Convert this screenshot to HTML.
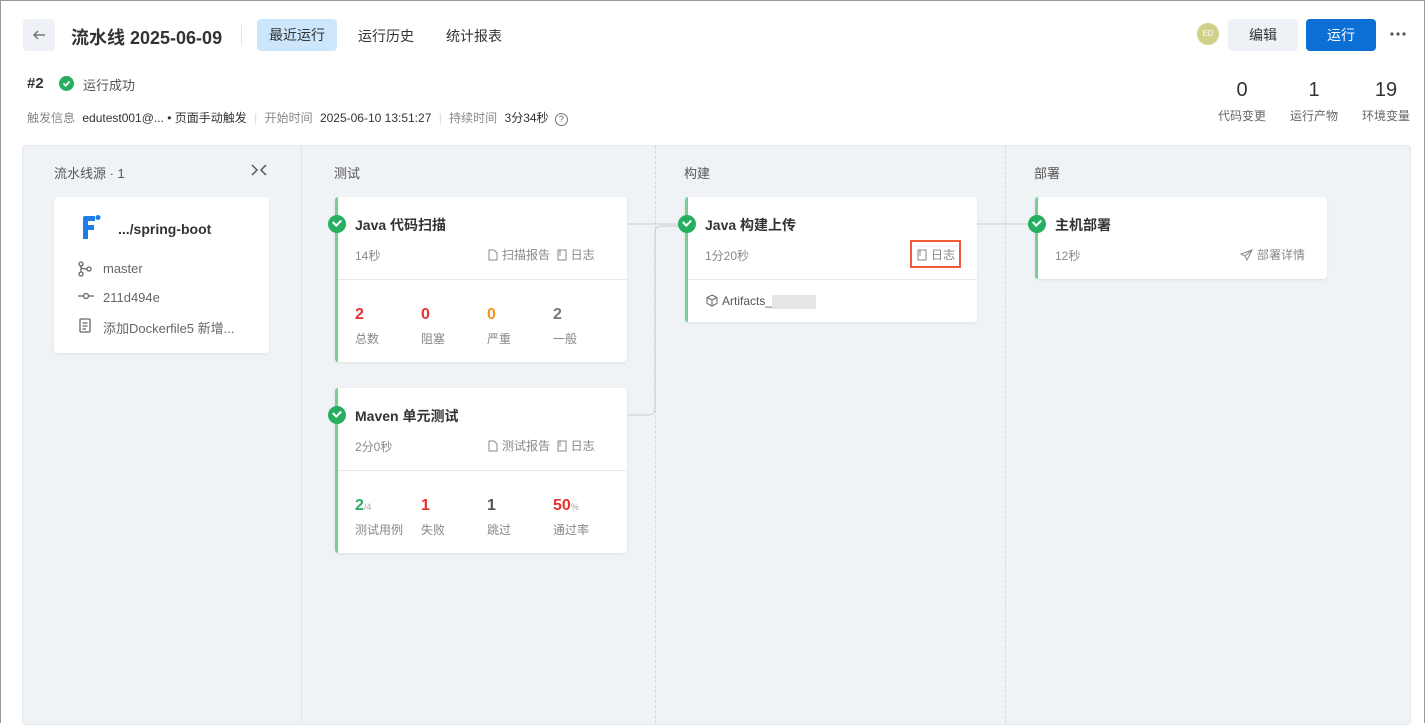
<!DOCTYPE html>
<html><head><meta charset="utf-8"><style>
*{box-sizing:border-box;margin:0;padding:0}
body{width:1425px;height:723px;overflow:hidden;background:#fff;font-family:"Liberation Sans","Noto Sans CJK SC",sans-serif;color:#333;position:relative}
.a{position:absolute;white-space:nowrap}
.card{position:absolute;background:#fff;border-radius:4px;box-shadow:0 1px 3px rgba(0,0,0,.08)}
.bar{position:absolute;left:0;top:0;bottom:0;width:3px;background:#74d18e;border-radius:3px 0 0 3px}
.chk{position:absolute;left:-7px;top:18px;width:18px;height:18px;border-radius:50%;background:#27ae60}
.chk:after{content:"";position:absolute;left:5px;top:4px;width:6px;height:4px;border-left:2px solid #fff;border-bottom:2px solid #fff;transform:rotate(-45deg)}
.t{font-size:13px;font-weight:bold;color:#333}
.s{font-size:12px;color:#888}
.hr{position:absolute;left:3px;right:0;height:1px;background:#e8e8e8}
.n{font-size:16px;font-weight:bold}
svg.i{vertical-align:-2px;margin-right:4px}
</style></head><body>
<div class="a" style="left:0;top:0;width:1425px;height:723px;border:1px solid #999;border-bottom:none"></div>
<div class="a" style="left:23px;top:19px;width:32px;height:32px;background:#eef1f5;border-radius:4px"></div>
<svg class="a" style="left:31px;top:27px" width="16" height="16"><path d="M14 8H3M7 4L3 8L7 12" fill="none" stroke="#777" stroke-width="1.5"/></svg>
<div class="a" style="left:71px;top:24px;font-size:18px;font-weight:bold;color:#333">流水线 2025-06-09</div>
<div class="a" style="left:241px;top:25px;width:1px;height:20px;background:#e3e3e3"></div>
<div class="a" style="left:257px;top:19px;width:80px;height:32px;background:#cce6fb;border-radius:4px;text-align:center;line-height:32px;font-size:14px">最近运行</div>
<div class="a" style="left:358px;top:26px;font-size:14px">运行历史</div>
<div class="a" style="left:446px;top:26px;font-size:14px">统计报表</div>
<div class="a" style="left:1197px;top:23px;width:22px;height:22px;border-radius:50%;background:#cfd08a;color:#fff;font-size:8px;text-align:center;line-height:22px">ED</div>
<div class="a" style="left:1228px;top:19px;width:70px;height:32px;background:#eef1f5;border-radius:4px;text-align:center;line-height:32px;font-size:14px">编辑</div>
<div class="a" style="left:1306px;top:19px;width:70px;height:32px;background:#0b6fd6;border-radius:4px;text-align:center;line-height:32px;font-size:14px;color:#fff">运行</div>
<svg class="a" style="left:1390px;top:32px" width="16" height="4"><circle cx="2" cy="2" r="1.6" fill="#555"/><circle cx="8" cy="2" r="1.6" fill="#555"/><circle cx="14" cy="2" r="1.6" fill="#555"/></svg>
<div class="a" style="left:27px;top:75px;font-size:15px;font-weight:bold">#2</div>
<div class="a" style="left:59px;top:76px;width:15px;height:15px;border-radius:50%;background:#27ae60"></div>
<svg class="a" style="left:59px;top:76px" width="15" height="15"><path d="M4.5 7.5L6.7 9.7L10.5 5.5" fill="none" stroke="#fff" stroke-width="1.8"/></svg>
<div class="a" style="left:83px;top:75px;font-size:13px;color:#555">运行成功</div>
<div class="a" style="left:27px;top:109px;font-size:12px;color:#888">触发信息 <span style="color:#333;margin-left:4px">edutest001@... • 页面手动触发</span> <span style="color:#ddd;margin:0 4px">|</span> 开始时间 <span style="color:#333;margin-left:4px">2025-06-10 13:51:27</span> <span style="color:#ddd;margin:0 4px">|</span> 持续时间 <span style="color:#333;margin-left:4px">3分34秒</span> <span style="display:inline-block;width:13px;height:13px;border:1px solid #777;border-radius:50%;font-size:9px;text-align:center;line-height:11px;color:#666;margin-left:3px">?</span></div>
<div class="a" style="left:1217px;top:79px;width:50px;text-align:center;font-size:20px">0</div>
<div class="a" style="left:1289px;top:79px;width:50px;text-align:center;font-size:20px">1</div>
<div class="a" style="left:1361px;top:79px;width:50px;text-align:center;font-size:20px">19</div>
<div class="a" style="left:1212px;top:107px;width:60px;text-align:center;font-size:12px;color:#666">代码变更</div>
<div class="a" style="left:1284px;top:107px;width:60px;text-align:center;font-size:12px;color:#666">运行产物</div>
<div class="a" style="left:1356px;top:107px;width:60px;text-align:center;font-size:12px;color:#666">环境变量</div>

<div class="a" style="left:22px;top:145px;width:1389px;height:580px;background:#f0f3f6;border:1px solid #e4e8ec;border-radius:4px"></div>
<div class="a" style="left:301px;top:146px;width:1px;height:577px;background:#dfe3e8"></div>
<div class="a" style="left:655px;top:146px;height:577px;border-left:1px dashed #d5d9de"></div>
<div class="a" style="left:1005px;top:146px;height:577px;border-left:1px dashed #d5d9de"></div>
<div class="a" style="left:54px;top:163px;font-size:13px;color:#555">流水线源 · 1</div>
<svg class="a" style="left:251px;top:164px" width="16" height="12"><path d="M1 1L6 6L1 11M15 1L10 6L15 11" fill="none" stroke="#555" stroke-width="1.5"/></svg>
<div class="a" style="left:334px;top:163px;font-size:13px;color:#555">测试</div>
<div class="a" style="left:684px;top:163px;font-size:13px;color:#555">构建</div>
<div class="a" style="left:1034px;top:163px;font-size:13px;color:#555">部署</div>

<svg class="a" style="left:0;top:0" width="1425" height="723"><path d="M627 224H685M627 415H648Q655 415 655 408V232Q655 226 662 226H685M977 224H1035" fill="none" stroke="#c9cdd2"/></svg>

<div class="card" style="left:54px;top:197px;width:215px;height:156px">
<svg class="a" style="left:25px;top:17px" width="22" height="26"><path d="M4 4Q4 2 6 2H16V7H9V11H15V16H9V25H4Z" fill="#1e7de6"/><circle cx="19" cy="3.5" r="2.5" fill="#1e7de6"/></svg>
<div class="a t" style="left:64px;top:24px;font-size:14px">.../spring-boot</div>
<svg class="a" style="left:24px;top:64px" width="14" height="16"><circle cx="3" cy="3" r="2" fill="none" stroke="#666" stroke-width="1.3"/><circle cx="3" cy="13" r="2" fill="none" stroke="#666" stroke-width="1.3"/><circle cx="11" cy="8" r="2" fill="none" stroke="#666" stroke-width="1.3"/><path d="M3 5V11M3 6Q3 8 9 8" fill="none" stroke="#666" stroke-width="1.3"/></svg>
<div class="a" style="left:49px;top:64px;font-size:13px;color:#666">master</div>
<svg class="a" style="left:24px;top:95px" width="16" height="8"><path d="M0 4H5M11 4H16" stroke="#666" stroke-width="1.3"/><circle cx="8" cy="4" r="2.5" fill="none" stroke="#666" stroke-width="1.3"/></svg>
<div class="a" style="left:49px;top:93px;font-size:13px;color:#666">211d494e</div>
<svg class="a" style="left:25px;top:121px" width="12" height="15"><rect x="1" y="1" width="10" height="13" rx="1" fill="none" stroke="#666" stroke-width="1.3"/><path d="M3.5 5H8.5M3.5 8H8.5M3.5 11H7" stroke="#666" stroke-width="1.2"/></svg>
<div class="a" style="left:49px;top:121px;font-size:13px;color:#666">添加Dockerfile5 新增...</div>
</div>

<div class="card" style="left:335px;top:197px;width:292px;height:165px"><div class="bar"></div><div class="chk"></div>
<div class="a t" style="left:20px;top:18px;font-size:14px">Java 代码扫描</div>
<div class="a s" style="left:20px;top:50px">14秒</div>
<div class="a s" style="left:153px;top:49px"><svg class="i" width="10" height="12"><path d="M1 1H6L9 4V11H1Z" fill="none" stroke="#888"/></svg>扫描报告 &nbsp;<svg class="i" width="10" height="12"><rect x="1" y="1" width="8" height="10" fill="none" stroke="#888"/><path d="M3 1V7" stroke="#888"/></svg>日志</div>
<div class="hr" style="top:82px"></div>
<div class="a n" style="left:20px;top:109px;color:#e5322d">2</div><div class="a s" style="left:20px;top:133px">总数</div>
<div class="a n" style="left:86px;top:109px;color:#e5322d">0</div><div class="a s" style="left:86px;top:133px">阻塞</div>
<div class="a n" style="left:152px;top:109px;color:#f5901f">0</div><div class="a s" style="left:152px;top:133px">严重</div>
<div class="a n" style="left:218px;top:109px;color:#777">2</div><div class="a s" style="left:218px;top:133px">一般</div>
</div>

<div class="card" style="left:335px;top:388px;width:292px;height:165px"><div class="bar"></div><div class="chk"></div>
<div class="a t" style="left:20px;top:18px;font-size:14px">Maven 单元测试</div>
<div class="a s" style="left:20px;top:50px">2分0秒</div>
<div class="a s" style="left:153px;top:49px"><svg class="i" width="10" height="12"><path d="M1 1H6L9 4V11H1Z" fill="none" stroke="#888"/></svg>测试报告 &nbsp;<svg class="i" width="10" height="12"><rect x="1" y="1" width="8" height="10" fill="none" stroke="#888"/><path d="M3 1V7" stroke="#888"/></svg>日志</div>
<div class="hr" style="top:82px"></div>
<div class="a n" style="left:20px;top:109px;color:#27ae60">2<span style="font-size:9px;color:#aaa;font-weight:normal">/4</span></div><div class="a s" style="left:20px;top:133px">测试用例</div>
<div class="a n" style="left:86px;top:109px;color:#e5322d">1</div><div class="a s" style="left:86px;top:133px">失败</div>
<div class="a n" style="left:152px;top:109px;color:#555">1</div><div class="a s" style="left:152px;top:133px">跳过</div>
<div class="a n" style="left:218px;top:109px;color:#e5322d">50<span style="font-size:9px;color:#aaa;font-weight:normal">%</span></div><div class="a s" style="left:218px;top:133px">通过率</div>
</div>

<div class="card" style="left:685px;top:197px;width:292px;height:125px"><div class="bar"></div><div class="chk"></div>
<div class="a t" style="left:20px;top:18px;font-size:14px">Java 构建上传</div>
<div class="a s" style="left:20px;top:50px">1分20秒</div>
<div class="a" style="left:225px;top:43px;width:51px;height:28px;border:2px solid #ef5a3a"></div>
<div class="a s" style="left:232px;top:49px"><svg class="i" width="10" height="12"><rect x="1" y="1" width="8" height="10" fill="none" stroke="#888"/><path d="M3 1V7" stroke="#888"/></svg>日志</div>
<div class="hr" style="top:82px"></div>
<div class="a s" style="left:21px;top:97px;color:#555"><svg class="i" width="12" height="13"><path d="M6 1L11 3.5V9.5L6 12L1 9.5V3.5Z M1 3.5L6 6L11 3.5M6 6V12" fill="none" stroke="#666"/></svg>Artifacts_<span style="display:inline-block;width:44px;height:14px;background:#e6e6e6;vertical-align:middle"></span></div>
</div>

<div class="card" style="left:1035px;top:197px;width:292px;height:82px"><div class="bar"></div><div class="chk"></div>
<div class="a t" style="left:20px;top:18px;font-size:14px">主机部署</div>
<div class="a s" style="left:20px;top:50px">12秒</div>
<div class="a s" style="left:205px;top:49px"><svg class="i" width="13" height="12"><path d="M12 1L1 5L5 7L7 11Z M5 7L12 1" fill="none" stroke="#888"/></svg>部署详情</div>
</div>
</body></html>
